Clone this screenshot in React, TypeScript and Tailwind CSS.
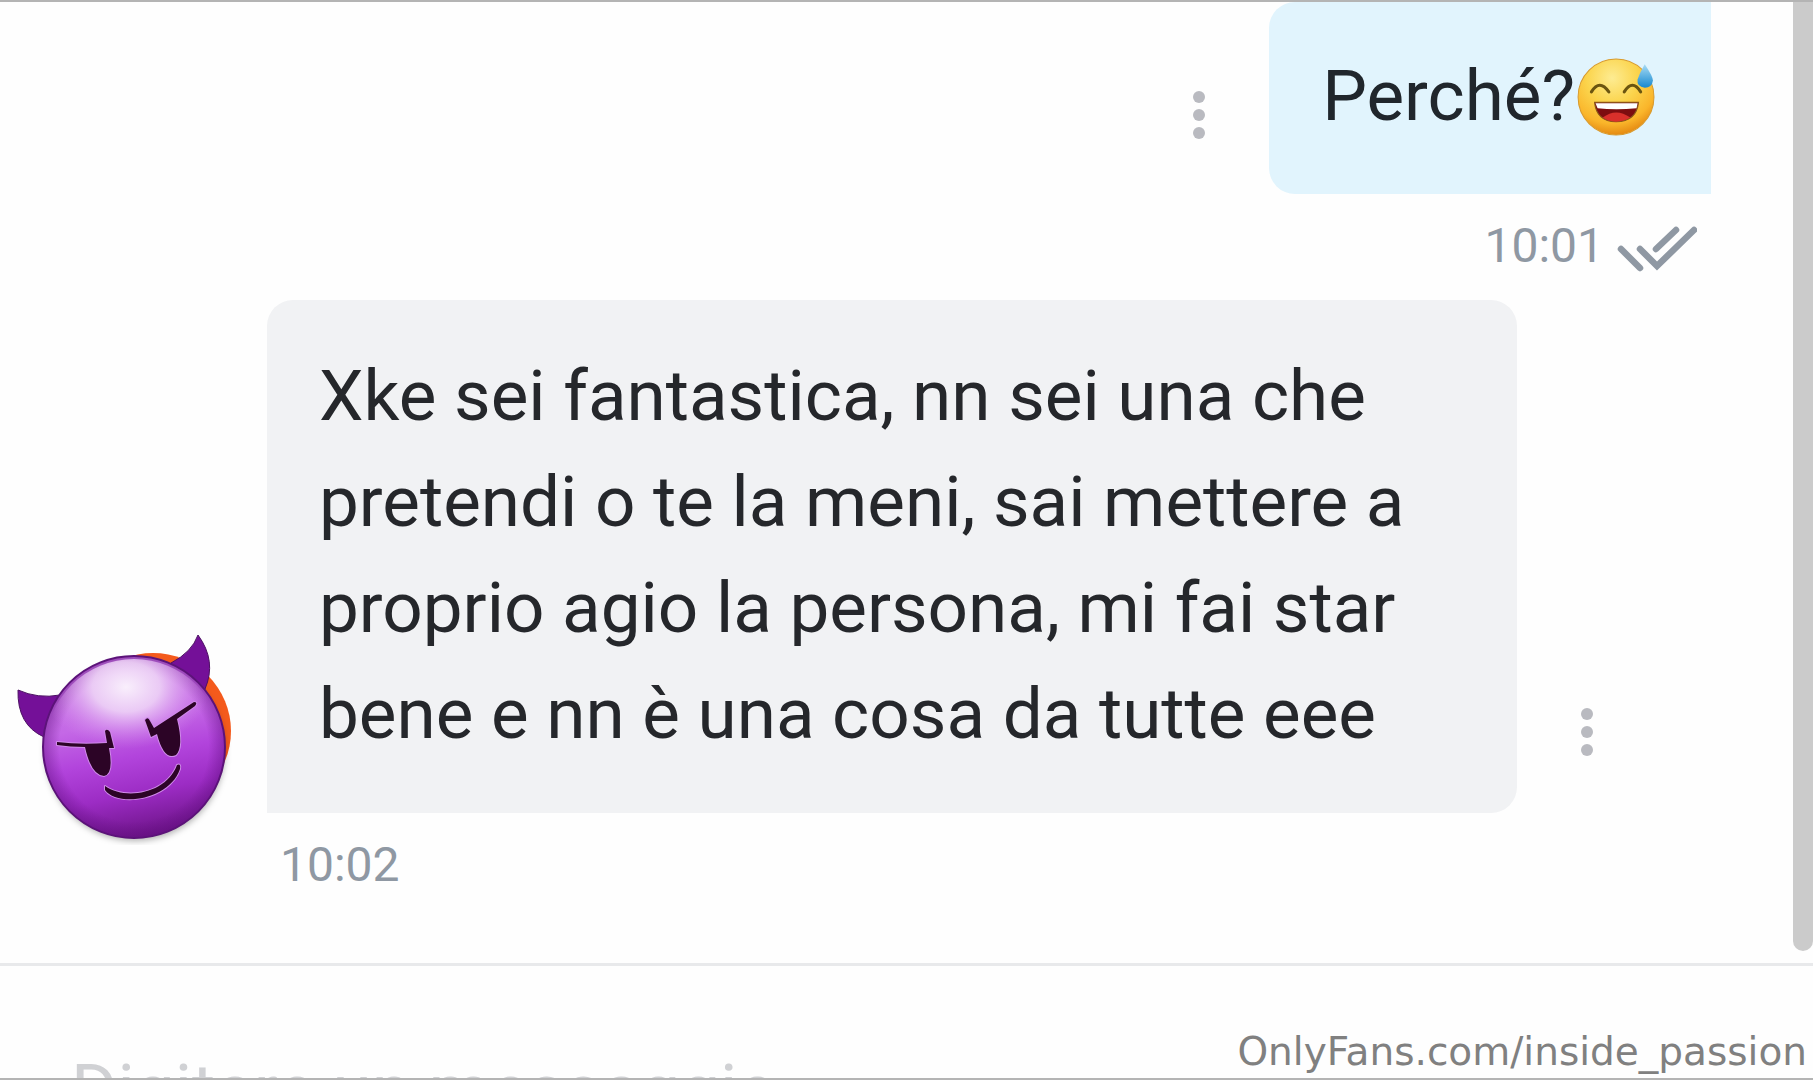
import React from 'react';

interface MessageProps {
  text: string;
  time: string;
}

const MoreButton: React.FC = () => (
  <button type="button" aria-label="Altro" className="shrink-0 p-3">
    <svg viewBox="0 0 12 48" className="h-12 w-3" fill="#b9bac0">
      <circle cx="6" cy="6" r="6" />
      <circle cx="6" cy="24" r="6" />
      <circle cx="6" cy="42" r="6" />
    </svg>
  </button>
);

const DoubleCheck: React.FC = () => (
  <svg viewBox="0 -6 80 52" className="h-[52px] w-20" fill="none" stroke="#8f98a3" strokeWidth="6.5" strokeLinecap="round">
    <path d="M4 23 L23 42" />
    <path d="M23 23 L40 40 L77 4" />
    <path d="M39 23 L59 4" />
  </svg>
);

const SweatSmile: React.FC = () => (
  <svg viewBox="-1 -1 76 78" className="size-20" role="img" aria-label="😅">
    <defs>
      <radialGradient id="skin" cx="45%" cy="25%" r="75%">
        <stop offset="0" stopColor="#fdec92" />
        <stop offset="0.45" stopColor="#fbd44c" />
        <stop offset="0.8" stopColor="#fab52a" />
        <stop offset="1" stopColor="#e58a12" />
      </radialGradient>
      <linearGradient id="drop" x1="0" y1="0" x2="0" y2="1">
        <stop offset="0" stopColor="#a8dcf5" />
        <stop offset="1" stopColor="#1688cf" />
      </linearGradient>
    </defs>
    <circle cx="38" cy="39" r="37" fill="url(#skin)" stroke="#d99a2b" />
    <path d="M14 34 Q22 21 31 34 M46 34 Q54 21 62 34" fill="none" stroke="#6b5510" strokeWidth="3" strokeLinecap="round" />
    <path d="M17 44 H60 Q58 63 38 63 Q19 63 17 44Z" fill="#7d0d10" stroke="#8a5a18" strokeWidth="1" />
    <path d="M25 59 Q38 49 52 59 Q46 63 38 63 Q30 63 25 59Z" fill="#d9302b" />
    <path d="M18 45 H59 L58 50 Q38 52 20 50Z" fill="#fff" />
    <path d="M66 7 Q74 19 74 23 Q73 30 66 30 Q58 29 59 22 Q61 15 66 7Z" fill="url(#drop)" />
  </svg>
);

const DevilAvatar: React.FC = () => (
  <svg viewBox="0 0 240 216" className="h-[216px] w-60" role="img" aria-label="😈">
    <defs>
      <linearGradient id="face" x1="0.4" y1="0" x2="0.6" y2="1">
        <stop offset="0" stopColor="#c77be2" />
        <stop offset="0.35" stopColor="#c468e6" />
        <stop offset="0.55" stopColor="#b244dc" />
        <stop offset="0.75" stopColor="#9c2cc4" />
        <stop offset="1" stopColor="#6a1284" />
      </linearGradient>
      <radialGradient id="edge">
        <stop offset="0.82" stopColor="#5f0c7e" stopOpacity="0" />
        <stop offset="1" stopColor="#5f0c7e" stopOpacity="0.45" />
      </radialGradient>
      <radialGradient id="shine">
        <stop offset="0" stopColor="#f9effc" />
        <stop offset="0.4" stopColor="#f1daf8" stopOpacity="0.85" />
        <stop offset="1" stopColor="#d78af0" stopOpacity="0" />
      </radialGradient>
      <clipPath id="head">
        <circle cx="134" cy="118" r="88" />
      </clipPath>
      <filter id="shade" x="-20%" y="-20%" width="140%" height="140%">
        <feDropShadow dx="1" dy="4" stdDeviation="3" floodColor="#000" floodOpacity="0.3" />
      </filter>
    </defs>
    <circle cx="153" cy="102" r="78" fill="#f45a1c" />
    <circle cx="134" cy="118" r="90" fill="#5b1478" filter="url(#shade)" />
    <path d="M18 61 Q38 70 60 66 L44 108 Q17 96 18 61Z" fill="#741098" stroke="#4c1063" />
    <path d="M171 34 Q192 23 198 6 Q217 32 205 60 L198 64Z" fill="#741098" stroke="#4c1063" />
    <circle cx="134" cy="118" r="91" fill="url(#face)" stroke="#5b1478" strokeWidth="2" />
    <circle cx="134" cy="118" r="91" fill="url(#edge)" />
    <ellipse cx="126" cy="58" rx="84" ry="62" fill="url(#shine)" clipPath="url(#head)" />
    <g fill="#2c0426" stroke="#d08bea" strokeWidth="2" strokeLinejoin="round" paintOrder="stroke">
      <path d="M57 113 Q80 116 107 114 L105 102 Q107 99 110 103 L114 119 L109 119 Q114 145 104 147 Q91 146 85 118 Q70 118 57 116Z" />
      <path d="M145 91 Q148 87 150 92 L154 99 L194 73 Q198 73 195 77 L177 90 Q184 118 176 126 Q164 132 157 105 L151 108Z" />
      <path d="M105 157 C126 172 167 164 177 136 Q181 134 180 140 C169 172 117 178 105 161Z" />
    </g>
  </svg>
);

const SentMessage: React.FC<MessageProps> = ({ text, time }) => (
  <div className="flex flex-col items-end pr-[102px]">
    <div className="flex items-center gap-[52px]">
      <div className="pt-[34px]">
        <MoreButton />
      </div>
      <div className="flex items-center rounded-l-[26px] bg-[#e1f4fd] pt-[41px] pr-14 pb-[45px] pl-[53px] text-[71px] leading-[106px] text-[#20262c]">
        {text}
        <SweatSmile />
      </div>
    </div>
    <div className="flex items-center gap-[13px] pt-6 pr-[14px] text-5xl leading-[56px] text-[#8f98a3]">
      <time>{time}</time>
      <DoubleCheck />
    </div>
  </div>
);

const ReceivedMessage: React.FC<MessageProps> = ({ text, time }) => (
  <div className="flex items-end pr-[208px]">
    <div className="flex w-[267px] shrink-0 pb-[48px]">
      <DevilAvatar />
    </div>
    <div className="min-w-0 flex-1">
      <div className="flex items-end gap-[52px]">
        <p className="flex-1 rounded-[26px] rounded-bl-none bg-[#f1f2f4] pt-[43px] pr-[100px] pb-[46px] pl-[52px] text-[71px] leading-[106px] text-[#25272b]">
          {text}
        </p>
        <div className="pb-[45px]">
          <MoreButton />
        </div>
      </div>
      <time className="block pt-6 pl-[13px] text-5xl leading-[56px] text-[#8f98a3]">{time}</time>
    </div>
  </div>
);

const App: React.FC = () => (
  <div className="relative flex h-screen flex-col overflow-hidden border-y-2 border-[#b4b4b4] bg-[#fefefe] font-['Roboto',sans-serif]">
    <main className="relative shrink-0 border-b-3 border-[#e8e9eb] pb-[70px]">
      <SentMessage text="Perché?" time="10:01" />
      <div className="pt-[26px]">
        <ReceivedMessage
          text="Xke sei fantastica, nn sei una che pretendi o te la meni, sai mettere a proprio agio la persona, mi fai star bene e nn è una cosa da tutte eee"
          time="10:02"
        />
      </div>
      <div className="absolute top-0 right-0 bottom-3 w-5 rounded-b-full bg-[#cbcbcb]" />
    </main>
    <form className="shrink-0 px-[71px] pt-[71px]">
      <input
        type="text"
        aria-label="Messaggio"
        placeholder="Digitare un messaggio"
        className="block h-[106px] w-full text-[71px] placeholder:text-[#d0d1d4] focus:outline-none"
      />
    </form>
    <a
      href="#"
      className="absolute right-[6px] bottom-[3px] font-['DejaVu_Sans',sans-serif] text-[39px] leading-[46px] text-[#808080]"
    >
      OnlyFans.com/inside_passion
    </a>
  </div>
);

export default App;
